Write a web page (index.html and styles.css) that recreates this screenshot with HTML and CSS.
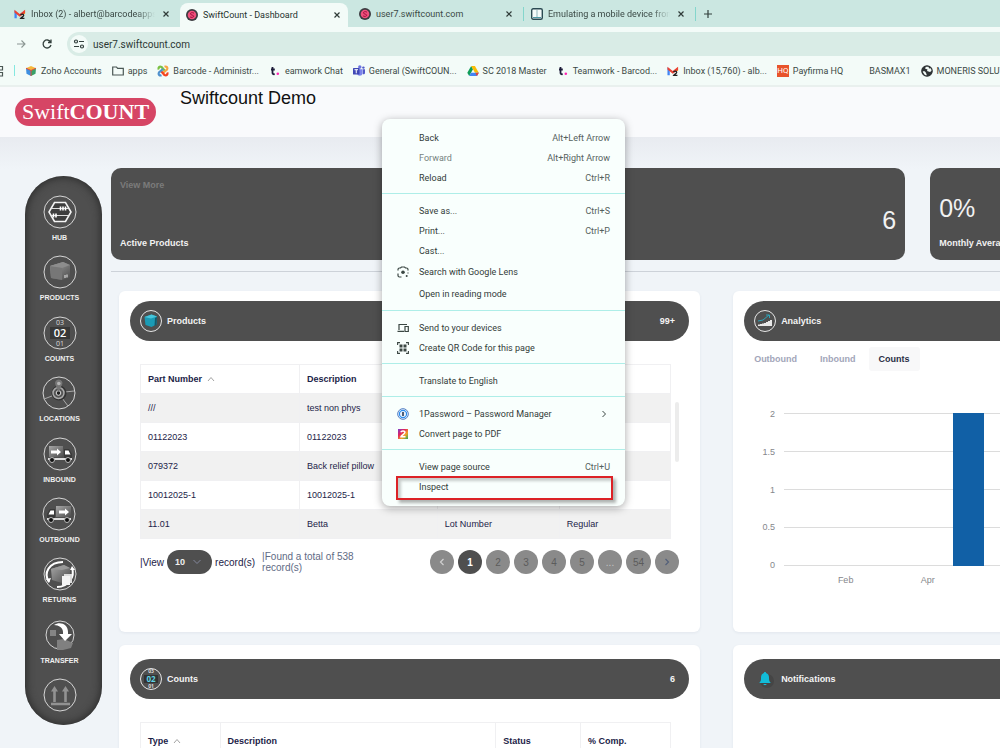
FILE: index.html
```html
<!DOCTYPE html>
<html lang="en">
<head>
    <meta charset="UTF-8">
    <meta name="viewport" content="width=device-width, initial-scale=1.0">
    <title>SwiftCount - Dashboard</title>
    <link rel="stylesheet" href="styles.css">
</head>
<body>
    <!-- Shared icons -->
    <svg class="defs" width="0" height="0">
        <defs>
            <linearGradient id="metal" x1="0" y1="0" x2="1" y2="1">
                <stop offset="0" stop-color="#a8a8a8"/>
                <stop offset="1" stop-color="#4c4c4c"/>
            </linearGradient>
            <linearGradient id="rainbow" x1="0" y1="0" x2="1" y2="1">
                <stop offset="0" stop-color="#7a3fd0"/>
                <stop offset="0.35" stop-color="#e0245e"/>
                <stop offset="0.65" stop-color="#f5a020"/>
                <stop offset="1" stop-color="#25a85a"/>
            </linearGradient>
            <symbol id="gmail" viewBox="0 0 13 12">
                <path d="M0.5 2v8.5H3V5z" fill="#4285f4"/>
                <path d="M12 2v4H9.500V4z" fill="#fbbc04"/>
                <path d="M0.500 1.500L6.200 6 12 1.500V5L6.200 9 0.500 4.500z" fill="#ea4335"/>
                <path d="M7 7.200c.6-1.700 3.700-1.500 3.500.3-.1 1.300-2.300 2-3.200 3.300h4" fill="none" stroke="#222" stroke-width="1.400"/>
            </symbol>
            <symbol id="swift" viewBox="0 0 12 12">
                <circle cx="6" cy="6" r="6" fill="#3c3c40"/>
                <circle cx="6" cy="6" r="4.300" fill="#f0507c"/>
                <path d="M8 4.200C6.500 3 4.200 3.700 4.400 5c.3 1.400 3.300.8 3.300 2.200C7.600 8.600 5 8.800 4 7.800" fill="none" stroke="#a3123f"/>
            </symbol>
            <symbol id="close" viewBox="0 0 8 8">
                <path d="M1.500 1.500l5 5m0-5l-5 5" stroke="#2f3b38" stroke-width="1.200"/>
            </symbol>
            <symbol id="tdot" viewBox="0 0 10 12">
                <path d="M2.500 2v5.800c0 1.300.7 1.600 2.200 1.400M1 4.500h3.800" fill="none" stroke="#1d1c39" stroke-width="1.800"/>
                <circle cx="7.800" cy="8.800" r="1.300" fill="#ff22b1"/>
            </symbol>
            <symbol id="truck" viewBox="0 0 34 34">
                <rect x="6" y="9" width="14" height="11" fill="url(#metal)"/>
                <path d="M8 13.500h6v-2l4 3.500-4 3.500v-2H8z" fill="#fff"/>
                <path d="M21 12h5l3 5v5h-8z" fill="#3a3a3a"/>
                <path d="M22 13.500h3.500l2 4H22z" fill="#fff"/>
                <path d="M5 22h24" stroke="#ddd" stroke-width="2"/>
                <circle cx="9" cy="23" r="2.500" fill="#111" stroke="#bbb"/>
                <circle cx="25" cy="23" r="2.500" fill="#111" stroke="#bbb"/>
            </symbol>
        </defs>
    </svg>

    <div class="browser">
        <!-- Tabs -->
        <div class="tab-strip">
            <div class="tab">
                <svg class="icon"><use href="#gmail"/></svg>
                <span class="tab-title fade">Inbox (2) - albert@barcodeapps.com</span>
                <button class="tab-close" aria-label="Close tab"><svg><use href="#close"/></svg></button>
            </div>
            <div class="tab active">
                <svg class="icon"><use href="#swift"/></svg>
                <span class="tab-title">SwiftCount - Dashboard</span>
                <button class="tab-close" aria-label="Close tab"><svg><use href="#close"/></svg></button>
            </div>
            <div class="tab divided">
                <svg class="icon"><use href="#swift"/></svg>
                <span class="tab-title">user7.swiftcount.com</span>
                <button class="tab-close" aria-label="Close tab"><svg><use href="#close"/></svg></button>
            </div>
            <div class="tab divided">
                <svg class="icon" viewBox="0 0 12 12"><rect x="0.700" y="0.700" width="10.600" height="10.600" rx="1.500" fill="#f4fbfa" stroke="#2b4a52" stroke-width="1.400"/><path d="M6 2v7" stroke="#8fb5bb"/><path d="M2 9.500h8" stroke="#4d9aa6"/></svg>
                <span class="tab-title fade">Emulating a mobile device from the desktop</span>
                <button class="tab-close" aria-label="Close tab"><svg><use href="#close"/></svg></button>
            </div>
            <button class="new-tab" aria-label="New tab"><svg viewBox="0 0 8 8"><path d="M4 0v8M0 4h8" stroke="#33403d" stroke-width="1.200"/></svg></button>
        </div>

        <!-- Address bar -->
        <div class="toolbar">
            <button class="nav-button" aria-label="Forward"><svg viewBox="0 0 12 12"><path d="M2 6h8M6.500 2.500L10 6 6.500 9.500" fill="none" stroke="#8b9693" stroke-width="1.100"/></svg></button>
            <button class="nav-button" aria-label="Reload"><svg viewBox="0 0 12 12"><path d="M9.500 3.800A4 4 0 1 0 10 7M10 1.500V4.500H7" fill="none" stroke="#33403d" stroke-width="1.300"/></svg></button>
            <div class="address">
                <span class="site-info"><svg viewBox="0 0 12 12"><path d="M6 3.500h5M1 8.500h5" stroke="#33403d" stroke-width="1.200"/><circle cx="3" cy="3.500" r="1.500" fill="none" stroke="#33403d" stroke-width="1.200"/><circle cx="9" cy="8.500" r="1.500" fill="none" stroke="#33403d" stroke-width="1.200"/></svg></span>
                <input type="text" value="user7.swiftcount.com" aria-label="Address">
            </div>
        </div>

        <!-- Bookmarks -->
        <nav class="bookmarks">
            <svg class="apps-grid" viewBox="0 0 4 12"><path d="M0 1.500h2.500V5H0M0 7.500h2.500V11H0" fill="none" stroke="#4a5754" stroke-width="1.200"/></svg>
            <span class="bookmark-divider"></span>
            <a href="#"><svg class="icon" viewBox="0 0 12 12"><path d="M6 1l5 2.200L6 5.500 1 3.200z" fill="#f6b93b"/><path d="M1 3.200l5 2.300V11L1.500 8.700z" fill="#3d8fe0"/><path d="M11 3.200L6 5.500V11l4.500-2.300z" fill="#38a169"/><path d="M6 5.500V11M1 3.200l5 2.300 5-2.300" stroke="#e04b3c" fill="none"/></svg>Zoho Accounts</a>
            <a href="#"><svg class="icon" viewBox="0 0 12 12"><path d="M0.700 2h3.800l1.200 1.300h5.600V10H0.700z" fill="none" stroke="#4a5754" stroke-width="1.200"/></svg>apps</a>
            <a href="#"><svg class="icon" viewBox="0 0 12 12"><g fill="none" stroke-width="2.200"><path d="M1.800 4.500C1 2.500 2.500 1 4.500 2l3.500 4" stroke="#7ac143"/><path d="M7.500 1.800C9.500 1 11 2.500 10 4.500L6 8" stroke="#f9a541"/><path d="M10.200 7.500c.8 2-.7 3.500-2.700 2.500L4 6" stroke="#f44321"/><path d="M4.500 10.200c-2 .8-3.500-.7-2.500-2.700L6 4" stroke="#5091cd"/></g></svg>Barcode - Administr...</a>
            <a href="#"><svg class="icon"><use href="#tdot"/></svg>eamwork Chat</a>
            <a href="#"><svg class="icon" viewBox="0 0 12 12"><circle cx="6.800" cy="2" r="1.700" fill="#6c74e0"/><circle cx="10.400" cy="2.600" r="1.200" fill="#5059c9"/><path d="M4 4.200h5.500v4.300a2.800 2.800 0 0 1-5.500 0z" fill="#7b83eb"/><path d="M9.800 4.200H12v3.500c0 1.200-1 1.800-2.200 1.500z" fill="#5059c9"/><rect y="3" width="6.500" height="6.500" rx="0.600" fill="#4048b5"/><path d="M1.500 4.700h3.500M3.250 4.700v3.600" stroke="#fff"/></svg>General (SwiftCOUN...</a>
            <a href="#"><svg class="icon" viewBox="0 0 12 12"><path d="M4.200 1L0.300 7.800 2.200 11 6 4.300z" fill="#0f9d58"/><path d="M4.200 1h3.700l3.900 6.800H8z" fill="#fbbc04"/><path d="M4 7.800h7.800L10 11H2.200z" fill="#4285f4"/><path d="M9.900 7.800h1.900L10 11 8.500 8.400z" fill="#ea4335"/></svg>SC 2018 Master</a>
            <a href="#"><svg class="icon"><use href="#tdot"/></svg>Teamwork - Barcod...</a>
            <a href="#"><svg class="icon"><use href="#gmail"/></svg>Inbox (15,760) - alb...</a>
            <a href="#"><span class="hq">HQ</span>Payfirma HQ</a>
            <a href="#"><span class="icon"></span>BASMAX1</a>
            <a href="#"><svg class="icon" viewBox="0 0 12 12"><circle cx="6" cy="6" r="5.300" fill="#2f3436"/><path d="M1.500 6.500c2-.5 3 0 3.500 1.500l1 2.500H4z" fill="#f2fbf7"/><path d="M5 1.500L4 3.500l2.500 1L6 6l3 1 2-1.500-.5-2.500L8 3.500 7.500 1.500z" fill="#f2fbf7"/><circle cx="6" cy="6" r="5.200" fill="none" stroke="#2f3436" stroke-width="1.200"/></svg>MONERIS SOLUTIONS</a>
        </nav>
    </div>

    <div class="app">
        <header class="app-header">
            <a class="logo" href="#">Swift<strong>COUNT</strong></a>
            <h1>Swiftcount Demo</h1>
        </header>

        <div class="app-body">
            <!-- Side menu -->
            <nav class="side-menu">
                <a href="#">
                    <svg viewBox="0 0 34 34"><circle cx="17" cy="17" r="16"/><path d="M11.500 7.500h11L28 17l-5.500 9.500h-11L6 17z" fill="#3d3d3d" stroke="#f4f4f4" stroke-width="1.600"/><path d="M9 13.500h16M9 20.500h16" stroke="#ddd"/><path d="M17.500 11.500v4M20 11.500v4M22.500 11.500v4M10.500 18.500v4M13 18.500v4" stroke="#fff" stroke-width="1.600"/></svg>
                    HUB
                </a>
                <a href="#">
                    <svg viewBox="0 0 34 34"><circle cx="17" cy="17" r="16"/><path d="M7 11l13-4 7 3v12l-8 3-11-2z" fill="url(#metal)"/><path d="M7 11l12 2 8-3-7-3z" fill="#8d8d8d"/><path d="M7 11l12 2v12L8 23z" fill="#777"/><path d="M22 20v3M24 19.500v3" stroke="#eee"/></svg>
                    PRODUCTS
                </a>
                <a href="#">
                    <svg viewBox="0 0 34 34"><circle cx="17" cy="17" r="16"/><rect x="7" y="11" width="20" height="12" fill="#383838"/><text x="17" y="9" class="num-small">03</text><text x="17" y="21" class="num-large">02</text><text x="17" y="30" class="num-small">01</text></svg>
                    COUNTS
                </a>
                <a href="#">
                    <svg viewBox="0 0 34 34"><circle cx="17" cy="17" r="16"/><path d="M2 23l8-3M23 16l9-1M20 22l6 8" stroke="#aaa"/><circle cx="17" cy="17" r="7.500" fill="#333"/><circle cx="16.500" cy="17" r="5.500" fill="#555" stroke="#aaa" stroke-width="1.500"/><circle cx="16.500" cy="17" r="2.300" fill="#222" stroke="#ddd"/><path d="M16.500 16l-3-7a3.700 3.700 0 1 1 6.500 0z" fill="#777"/><circle cx="16.800" cy="7.500" r="1.800" fill="#b5b5b5"/></svg>
                    LOCATIONS
                </a>
                <a href="#">
                    <svg viewBox="0 0 34 34"><circle cx="17" cy="17" r="16"/><use href="#truck"/></svg>
                    INBOUND
                </a>
                <a href="#">
                    <svg viewBox="0 0 34 34"><circle cx="17" cy="17" r="16"/><rect x="14" y="9" width="15" height="11" fill="url(#metal)"/><path d="M17 13.500h6v-2l4 3.500-4 3.500v-2h-6z" fill="#fff"/><path d="M13 12H8l-3 5v5h8z" fill="#3a3a3a"/><path d="M12 13.500H8.500l-2 4H12z" fill="#fff"/><path d="M5 22h24" stroke="#ddd" stroke-width="2"/><circle cx="9" cy="23" r="2.500" fill="#111" stroke="#bbb"/><circle cx="25" cy="23" r="2.500" fill="#111" stroke="#bbb"/></svg>
                    OUTBOUND
                </a>
                <a href="#">
                    <svg viewBox="0 0 34 34"><circle cx="17" cy="17" r="16"/><path d="M8 12l13-4 6 3v9l-8 6-10-3z" fill="url(#metal)"/><path d="M8 12l11 1 8-2-6-3z" fill="#999"/><path d="M6 25C0 16 6 5 20 5" fill="none" stroke="#fff" stroke-width="2"/><path d="M29 11c3 8-3 19-15 19" fill="none" stroke="#fff" stroke-width="2"/><path d="M3 22l3 4 2-5zM27 13l2-4 3 4z" fill="#fff"/><rect x="21" y="17" width="8" height="9" fill="#ddd"/><rect x="19" y="19" width="8" height="9" fill="#f4f4f4"/></svg>
                    RETURNS
                </a>
                <a href="#">
                    <svg viewBox="0 0 34 34"><circle cx="17" cy="17" r="14"/><rect x="7" y="12" width="6" height="6" fill="#858585"/><path d="M14 32V22l7-1 9 4-2 5-8 2z" fill="#808080"/><path d="M11 7c6-4 14-1 14 7v2h4l-7 7-6-7h4v-2c0-4-4-7-9-7z" fill="#fff"/></svg>
                    TRANSFER
                </a>
                <a href="#" aria-label="More">
                    <svg viewBox="0 0 34 34"><circle cx="17" cy="17" r="16"/><path d="M11.500 24V11M22.500 24V11M8 26h19" stroke="#929292" stroke-width="2.600"/><path d="M8 13.500l3.500-5.500 3.500 5.500zM19 13.500l3.500-5.500 3.500 5.500z" fill="#929292"/></svg>
                </a>
            </nav>

            <main class="viewport">
                <div class="content">
                    <!-- Stat cards -->
                    <section class="stats">
                        <div class="stat-card">
                            <a href="#">View More</a>
                            <strong class="stat-value right">6</strong>
                            <span>Active Products</span>
                        </div>
                        <div class="stat-card">
                            <strong class="stat-value">0%</strong>
                            <span>Monthly Average</span>
                        </div>
                    </section>

                    <hr>

                    <section class="panels">
                        <!-- Products -->
                        <article class="panel">
                            <h2 class="panel-title">
                                <svg viewBox="0 0 24 24"><circle cx="12" cy="12" r="10.500" fill="none" stroke="#e6e6e6"/><path d="M5.500 8l7-2.500 5.500 2-.5 8-5 2.500-6-2z" fill="#1b9bb5"/><path d="M5.500 8l6.500 1.500 6-2-5.500-2z" fill="#45c6dc"/><path d="M18 8l-.5 8-2 1 .5-8z" fill="#17596a"/></svg>
                                Products
                                <span class="count">99+</span>
                            </h2>
                            <div class="table-area">
                                <table>
                                    <colgroup><col class="w-30"><col class="w-26"><col class="w-23"><col class="w-21"></colgroup>
                                    <thead>
                                        <tr><th>Part Number <svg class="sort" viewBox="0 0 8 6"><path d="M1 5l3-3.500L7 5" fill="none" stroke="#a3a3a3"/></svg></th><th>Description</th><th></th><th></th></tr>
                                    </thead>
                                    <tbody>
                                        <tr><td>///</td><td>test non phys</td><td></td><td></td></tr>
                                        <tr><td>01122023</td><td>01122023</td><td></td><td></td></tr>
                                        <tr><td>079372</td><td>Back relief pillow</td><td></td><td></td></tr>
                                        <tr><td>10012025-1</td><td>10012025-1</td><td></td><td></td></tr>
                                        <tr><td>11.01</td><td>Betta</td><td>Lot Number</td><td>Regular</td></tr>
                                    </tbody>
                                </table>
                                <div class="scrollbar"><span></span></div>
                            </div>
                            <div class="table-footer">
                                <label for="page-size">|View</label>
                                <span class="select-wrap">
                                    <select id="page-size">
                                        <option>10</option>
                                        <option>25</option>
                                        <option>50</option>
                                    </select>
                                    <svg viewBox="0 0 8 6"><path d="M0.500 1L4 4.500 7.500 1" fill="none" stroke="#83879c"/></svg>
                                </span>
                                <span>record(s)</span>
                                <p>|Found a total of 538 record(s)</p>
                                <div class="pages">
                                    <button aria-label="Previous"><svg viewBox="0 0 6 8"><path d="M4.500 1L1.500 4l3 3" fill="none" stroke="#d0d0d0" stroke-width="1.200"/></svg></button>
                                    <button class="current">1</button>
                                    <button>2</button>
                                    <button>3</button>
                                    <button>4</button>
                                    <button>5</button>
                                    <button class="dots">...</button>
                                    <button>54</button>
                                    <button aria-label="Next"><svg viewBox="0 0 6 8"><path d="M1.500 1l3 3-3 3" fill="none" stroke="#53607a" stroke-width="1.200"/></svg></button>
                                </div>
                            </div>
                        </article>

                        <!-- Analytics -->
                        <article class="panel">
                            <h2 class="panel-title">
                                <svg viewBox="0 0 24 24"><circle cx="12" cy="12" r="10.500" fill="none" stroke="#e6e6e6"/><path d="M5 17v-1.500h2V15h2v-.5h2V14h2v-1h2v-1h2v-1h2v6z" fill="#e8e8e8"/><path d="M5 12l5-1 6-5M13 6h3.500v3" fill="none" stroke="#2fa3b8"/></svg>
                                Analytics
                            </h2>
                            <div class="chart-tabs">
                                <button>Outbound</button>
                                <button>Inbound</button>
                                <button class="selected">Counts</button>
                            </div>
                            <div class="chart">
                                <div class="y-axis"><span>2</span><span>1.5</span><span>1</span><span>0.5</span><span>0</span></div>
                                <div class="plot">
                                    <div class="grid-lines"><i></i><i></i><i></i><i></i></div>
                                    <div class="bars">
                                        <div style="height: 0%"></div>
                                        <div style="height: 0%"></div>
                                        <div style="height: 0%"></div>
                                        <div style="height: 0%"></div>
                                        <div style="height: 100%"></div>
                                    </div>
                                </div>
                                <div class="x-axis"><span></span><span>Feb</span><span></span><span>Apr</span></div>
                            </div>
                        </article>

                        <!-- Counts -->
                        <article class="panel lower">
                            <h2 class="panel-title">
                                <svg viewBox="0 0 24 24"><circle cx="12" cy="12" r="10.500" fill="none" stroke="#e6e6e6"/><rect x="5" y="8" width="14" height="8" fill="#333"/><text x="12" y="6" class="num-tiny">03</text><text x="12" y="15" class="num-mid">02</text><text x="12" y="21" class="num-tiny">01</text></svg>
                                Counts
                                <span class="count">6</span>
                            </h2>
                            <div class="table-area">
                                <table>
                                    <colgroup><col class="w-15"><col class="w-52"><col class="w-16"><col class="w-17"></colgroup>
                                    <thead>
                                        <tr><th>Type <svg class="sort" viewBox="0 0 8 6"><path d="M1 5l3-3.500L7 5" fill="none" stroke="#a3a3a3"/></svg></th><th>Description</th><th>Status</th><th>% Comp.</th></tr>
                                    </thead>
                                </table>
                                <div class="scrollbar"></div>
                            </div>
                        </article>

                        <!-- Notifications -->
                        <article class="panel lower">
                            <h2 class="panel-title">
                                <svg viewBox="0 0 24 24"><circle cx="14" cy="14" r="7" fill="#454545"/><path d="M12 5c1 0 1 .5 1 1 2 .6 3 2.200 3 4.500 0 3 .4 4 1.500 5v.5h-11v-.5c1.100-1 1.500-2 1.500-5C8 8.200 9 6.600 11 6c0-.5 0-1 1-1z" fill="#12bcd8"/><path d="M10.300 17h3.400c-.3 1.500-3.100 1.500-3.400 0z" fill="#12bcd8"/></svg>
                                Notifications
                            </h2>
                        </article>
                    </section>
                </div>
            </main>
        </div>
    </div>

    <!-- Context menu -->
    <div class="context-menu" role="menu">
        <div class="menu-group">
            <button role="menuitem">Back<kbd>Alt+Left Arrow</kbd></button>
            <button role="menuitem" disabled>Forward<kbd>Alt+Right Arrow</kbd></button>
            <button role="menuitem">Reload<kbd>Ctrl+R</kbd></button>
        </div>
        <div class="menu-group">
            <button role="menuitem">Save as...<kbd>Ctrl+S</kbd></button>
            <button role="menuitem">Print...<kbd>Ctrl+P</kbd></button>
            <button role="menuitem">Cast...</button>
            <button role="menuitem" class="with-icon tall"><svg viewBox="0 0 12 12"><path d="M1 4.500V3.500a1.500 1.500 0 0 1 1.500-1.500h1L4.500 1h3l1 1h1A1.500 1.500 0 0 1 11 3.500v1M1 7.500v2A1.500 1.500 0 0 0 2.500 11h2M11 6.500v1" fill="none" stroke="#3b4743" stroke-width="1.200"/><circle cx="6" cy="6.300" r="1.800" fill="#3b4743"/><circle cx="9.700" cy="10" r="1" fill="#3b4743"/></svg>Search with Google Lens</button>
            <button role="menuitem" class="tall">Open in reading mode</button>
        </div>
        <div class="menu-group">
            <button role="menuitem" class="with-icon"><svg viewBox="0 0 12 12"><path d="M2 8V2.500h8M0.500 9.300H7M8 4.500h3.300v5H8z" fill="none" stroke="#3b4743" stroke-width="1.200"/></svg>Send to your devices</button>
            <button role="menuitem" class="with-icon"><svg viewBox="0 0 12 12"><path d="M0.600 3V0.600H3M9 0.600h2.400V3M11.400 9v2.400H9M3 11.400H0.600V9" fill="none" stroke="#3b4743" stroke-width="1.100"/><path d="M2.500 2.500h3v3h-3zM6.500 2.500h3v3h-3zM2.500 6.500h3v3h-3zM6.500 6.500h3v3h-3z" fill="#3b4743"/></svg>Create QR Code for this page</button>
        </div>
        <div class="menu-group">
            <button role="menuitem">Translate to English</button>
        </div>
        <div class="menu-group">
            <button role="menuitem" class="with-icon"><svg viewBox="0 0 12 12"><circle cx="6" cy="6" r="5.300" fill="#fff" stroke="#4a78c0"/><circle cx="6" cy="6" r="3.600" fill="#e8f1fb" stroke="#2a8df0" stroke-width="1.200"/><path d="M6 4v4" stroke="#1b2c4d" stroke-width="1.500"/></svg>1Password – Password Manager<svg class="arrow" viewBox="0 0 6 8"><path d="M1.500 1l3 3-3 3" fill="none" stroke="#3b4743"/></svg></button>
            <button role="menuitem" class="with-icon"><svg viewBox="0 0 12 12"><rect x="1" y="1" width="10" height="10" fill="url(#rainbow)"/><path d="M3.800 4.300c.6-1.800 4.300-1.600 4.100.2C7.700 6.200 4.500 6.800 4 8.700h4.500" fill="none" stroke="#fff" stroke-width="1.500"/></svg>Convert page to PDF</button>
        </div>
        <div class="menu-group">
            <button role="menuitem">View page source<kbd>Ctrl+U</kbd></button>
            <button role="menuitem" class="highlighted">Inspect</button>
        </div>
    </div>
</body>
</html>
```
FILE: styles.css
```css
* {
    box-sizing: border-box;
}

body {
    margin: 0;
    height: 100vh;
    overflow: hidden;
    display: flex;
    flex-direction: column;
    font-family: "Liberation Sans", Arial, sans-serif;
    font-size: 9px;
    color: #1c2348;
    background-color: #f0f4f8;
}

button {
    font: inherit;
    color: inherit;
    border: none;
    background: none;
    padding: 0;
    cursor: pointer;
}

a {
    color: inherit;
    text-decoration: none;
}

.defs {
    position: absolute;
}

/* Browser frame */
.browser {
    flex-shrink: 0;
    font-family: Roboto, sans-serif;
    color: #3b4945;
    background-color: #f3fbf8;
    border-bottom: 2px solid #e9f0ee;
}

.icon {
    width: 12px;
    height: 12px;
    flex-shrink: 0;
}

.tab-strip {
    display: flex;
    align-items: center;
    height: 27px;
    padding-left: 8px;
    background-color: #cbe7e1;
}

.tab {
    display: flex;
    align-items: center;
    gap: 5px;
    flex: 0 1 172px;
    height: 14px;
    padding: 0 10px 0 6px;
    min-width: 0;
}

.tab.active {
    flex-basis: 168px;
    height: 24px;
    align-self: flex-end;
    margin-right: 4px;
    padding: 0 7px 0 6px;
    color: #26332f;
    background-color: #f3fbf8;
    border-radius: 8px 8px 0 0;
}

.tab.divided {
    padding-left: 7px;
    border-right: 1px solid #84d6cc;
}

.tab-title {
    flex: 1;
    min-width: 0;
    overflow: hidden;
    white-space: nowrap;
}

.tab-title.fade {
    -webkit-mask-image: linear-gradient(to right, #000 85%, transparent);
    mask-image: linear-gradient(to right, #000 85%, transparent);
}

.tab-close {
    display: flex;
    margin-left: 2px;
}

.tab-close svg, .new-tab svg {
    width: 8px;
    height: 8px;
}

.new-tab {
    display: flex;
    padding: 0 8px;
}

.toolbar {
    display: flex;
    align-items: center;
    gap: 14px;
    padding: 5px 0 0 15px;
}

.nav-button {
    display: flex;
}

.nav-button svg {
    width: 12px;
    height: 12px;
}

.address {
    flex: 1;
    display: flex;
    align-items: center;
    gap: 5px;
    height: 24px;
    padding-left: 3px;
    background-color: #d9ece6;
    border-radius: 12px 0 0 12px;
}

.address input {
    flex: 1;
    padding: 0;
    border: none;
    outline: none;
    background: none;
    font: 10px Roboto, sans-serif;
    color: #2b3834;
}

.site-info {
    display: flex;
    padding: 3px;
    border-radius: 50%;
    background-color: #f3fbf8;
}

.site-info svg {
    width: 12px;
    height: 12px;
}

.bookmarks {
    display: flex;
    align-items: center;
    gap: 10px;
    height: 29px;
    white-space: nowrap;
    overflow: hidden;
}

.bookmarks a {
    display: flex;
    align-items: center;
    gap: 4px;
}

.apps-grid {
    width: 4px;
    height: 12px;
    flex-shrink: 0;
}

.bookmark-divider {
    width: 1px;
    height: 11px;
    flex-shrink: 0;
    background-color: #84e8e0;
}

.hq {
    width: 12px;
    height: 12px;
    font-size: 8px;
    line-height: 12px;
    text-align: center;
    color: #fff;
    background-color: #e8532b;
}

/* App frame */
.app {
    flex: 1;
    min-height: 0;
}

.app-header {
    display: flex;
    align-items: flex-start;
    gap: 24px;
    height: 50px;
    padding: 0 15px;
    background-color: #f9fafc;
}

.app-header h1 {
    margin: 0;
    font-size: 18px;
    font-weight: normal;
    line-height: 22px;
    color: #111;
}

.logo {
    width: 141px;
    margin-top: 11px;
    border-radius: 14px;
    font-family: "Liberation Serif", serif;
    font-size: 22px;
    line-height: 28px;
    text-align: center;
    color: #fff;
    background-color: #d64565;
}

.app-body {
    display: flex;
    align-items: flex-start;
    gap: 9px;
    padding-left: 25px;
    background: linear-gradient(#e8ebf0, #f0f4f8 32px);
}

.side-menu {
    display: flex;
    flex-direction: column;
    align-items: center;
    justify-content: space-between;
    width: 77px;
    min-height: 549px;
    flex-shrink: 0;
    margin-top: 39px;
    padding: 19px 8px 13px 0;
    border-radius: 39px;
    background-color: #4f4f4f;
    box-shadow: inset 0 0 8px 1px #2a2a2a;
}

.side-menu a {
    display: flex;
    flex-direction: column;
    align-items: center;
    gap: 5px;
    font-size: 7px;
    font-weight: bold;
    line-height: 8px;
    color: #f0f0f0;
}

.side-menu svg {
    width: 34px;
    height: 34px;
}

.side-menu circle:first-child {
    fill: none;
    stroke: #d6d6d6;
}

text {
    text-anchor: middle;
    font-family: "Open Sans", sans-serif;
    fill: #ddd;
}

.num-small {
    font-size: 7px;
    font-weight: normal;
}

.num-large {
    font-size: 11px;
    font-weight: 600;
    fill: #fff;
}

.num-tiny {
    font-size: 5px;
}

.num-mid {
    font-size: 8px;
    fill: #5fd2e4;
}

.viewport {
    flex: 1;
    min-width: 0;
    overflow: hidden;
    padding-top: 31px;
}

/* The dashboard runs on past the right edge of the window */
.content {
    width: 134%;
}

.stats {
    display: grid;
    grid-template-columns: 794fr 372fr;
    gap: 25px;
}

.stat-card {
    display: flex;
    flex-direction: column;
    height: 92px;
    padding: 11px 9px;
    border-radius: 10px;
    font-weight: bold;
    line-height: 12px;
    color: #f2f2f2;
    background-color: #4f4f4f;
}

.stat-card a {
    color: #7b7b7b;
}

.stat-card span {
    margin-top: auto;
}

.stat-value {
    margin-top: 14px;
    font-size: 25px;
    font-weight: normal;
    line-height: 30px;
}

.stat-value.right {
    align-self: flex-end;
}

hr {
    margin: 11px 0 19px;
    border: none;
    border-top: 1px solid #cdd2d9;
}

.panels {
    display: grid;
    grid-template-columns: 581fr 561fr;
    gap: 13px 33px;
    padding: 0 8px;
}

.panel {
    min-height: 341px;
    padding: 10px 11px;
    border-radius: 6px;
    background-color: #fff;
    box-shadow: 0 1px 3px rgba(60, 80, 110, 0.08);
}

.panel.lower {
    padding-top: 14px;
}

.panel-title {
    display: flex;
    align-items: center;
    gap: 4px;
    height: 40px;
    margin: 0;
    padding: 0 14px 0 9px;
    border-radius: 20px;
    font-size: 9px;
    color: #f4f4f4;
    background-color: #4f4f4f;
}

.panel-title svg {
    width: 24px;
    height: 24px;
}

.count {
    margin-left: auto;
}

.table-area {
    display: flex;
    gap: 4px;
    margin: 23px 10px 0;
}

table {
    flex: 1;
    table-layout: fixed;
    border-collapse: collapse;
}

th, td {
    height: 29px;
    padding: 0 7px;
    border: 1px solid #f0f0f2;
    text-align: left;
    white-space: nowrap;
}

tbody tr:nth-child(odd) {
    background-color: #f1f1f1;
}

.sort {
    width: 8px;
    height: 6px;
    margin-left: 2px;
}

.w-15 { width: 15%; }
.w-16 { width: 16%; }
.w-17 { width: 17%; }
.w-21 { width: 21%; }
.w-23 { width: 23%; }
.w-26 { width: 26%; }
.w-30 { width: 30%; }
.w-52 { width: 52%; }

.scrollbar {
    width: 4px;
    padding-top: 38px;
}

.scrollbar span {
    display: block;
    height: 60px;
    border-radius: 2px;
    background-color: #ececec;
}

.table-footer {
    display: flex;
    align-items: center;
    gap: 3px;
    margin: 11px 10px 0;
    font-size: 10px;
}

.table-footer p {
    width: 100px;
    margin: 0 0 0 4px;
    line-height: 11px;
    color: #5f6b85;
}

.select-wrap {
    display: grid;
    align-items: center;
    width: 45px;
}

.select-wrap select, .select-wrap svg {
    grid-area: 1 / 1;
}

.select-wrap select {
    appearance: none;
    height: 24px;
    padding: 0 8px;
    border: none;
    border-radius: 12px;
    font: bold 9px "Liberation Sans", Arial, sans-serif;
    color: #f0f0f0;
    background-color: #4f4f4f;
}

.select-wrap svg {
    justify-self: end;
    width: 8px;
    height: 6px;
    margin-right: 11px;
    pointer-events: none;
}

.pages {
    display: flex;
    gap: 4px;
    margin-left: auto;
}

.pages button {
    display: flex;
    align-items: center;
    justify-content: center;
    min-width: 24px;
    height: 24px;
    padding: 0 7px;
    border-radius: 12px;
    color: #5c5c5c;
    background-color: #8a8a8a;
}

.pages button.current {
    font-weight: bold;
    color: #fff;
    background-color: #4f4f4f;
}

.pages button.dots {
    color: #c4c4c4;
}

.pages svg {
    width: 6px;
    height: 8px;
}

/* Analytics chart */
.chart-tabs {
    display: flex;
    gap: 3px;
    margin-top: 6px;
}

.chart-tabs button {
    height: 24px;
    padding: 0 10px;
    border-radius: 3px;
    font-weight: bold;
    color: #a2a5b9;
}

.chart-tabs button.selected {
    color: #2a2e45;
    background-color: #f8f8f9;
}

.chart {
    display: grid;
    grid-template-columns: 31px 1fr;
    column-gap: 9px;
    margin: 37px 7px 0 0;
    color: #85878c;
}

.y-axis {
    display: flex;
    flex-direction: column;
    justify-content: space-between;
    text-align: right;
    line-height: 12px;
}

.plot {
    display: grid;
    padding: 5px 0;
}

.grid-lines, .bars {
    grid-area: 1 / 1;
    display: grid;
}

.grid-lines {
    grid-template-rows: repeat(4, 38px);
    border-bottom: 1px solid #dcdcdc;
}

.grid-lines i {
    border-top: 1px solid #dcdcdc;
}

.bars, .x-axis {
    grid-template-columns: repeat(12, 1fr);
}

.bars {
    align-items: end;
}

.bars div {
    margin: 0 5px;
    background-color: #1160a6;
}

.x-axis {
    display: grid;
    grid-column: 2;
    margin-top: 4px;
    text-align: center;
}

/* Context menu */
.context-menu {
    position: absolute;
    left: 382px;
    top: 119px;
    width: 243px;
    padding: 2px 0 4px;
    border-radius: 8px;
    font-family: Roboto, sans-serif;
    color: #333c39;
    background-color: #f9fffd;
    box-shadow: 0 2px 8px rgba(0, 0, 0, 0.35);
}

.menu-group {
    padding: 7px 0 5px;
}

.menu-group + .menu-group {
    border-top: 1px solid #aeeee8;
}

.menu-group button {
    display: flex;
    align-items: center;
    width: 100%;
    height: 20px;
    padding: 0 15px 0 37px;
}

.menu-group button.with-icon {
    gap: 10px;
    padding-left: 15px;
}

.menu-group button.tall {
    height: 22px;
}

.menu-group button:disabled {
    color: #76827e;
}

.menu-group svg {
    width: 12px;
    height: 12px;
}

.menu-group svg.arrow {
    width: 6px;
    height: 8px;
    margin: 0 3px 0 auto;
}

kbd {
    margin-left: auto;
    font: inherit;
    color: #56625e;
}

.highlighted {
    position: relative;
}

.highlighted::after {
    content: "";
    position: absolute;
    inset: -1px 12px -3px 14px;
    border: 2px solid #dc2226;
    box-shadow: 3px 3px 3px rgba(0, 0, 0, 0.3), inset 3px 3px 3px rgba(0, 0, 0, 0.2);
}
```
